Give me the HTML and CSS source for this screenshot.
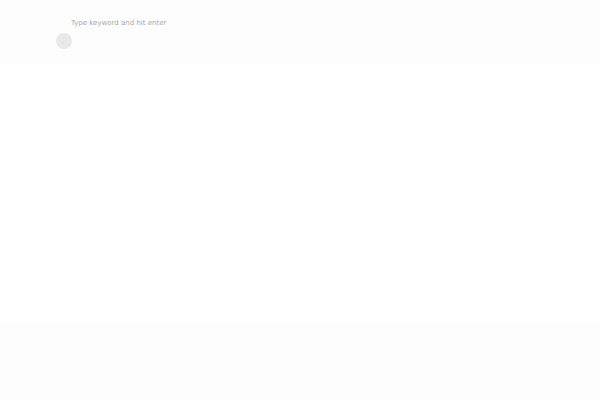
FILE: index.html
```
<!DOCTYPE html>
<html lang="en">
<head>
    <meta charset="UTF-8">
    <meta name="viewport" content="width=device-width, initial-scale=1">
    <title>Search</title>
    <link rel="stylesheet" href="styles.css">
</head>
<body>
    <header class="header">
        <form class="search_form" role="search">
            <input class="search_input" type="search" name="s" placeholder="Type keyword and hit enter" aria-label="Search">
            <button class="search_btn" type="submit" aria-label="Submit search">
                <svg viewBox="0 0 16 16" aria-hidden="true">
                    <circle cx="7" cy="7" r="3"/>
                    <path d="M9.2 9.2L12 12"/>
                </svg>
            </button>
        </form>
    </header>
    <main class="content"></main>
    <footer class="footer"></footer>
</body>
</html>
```

FILE: styles.css
```
*{
    box-sizing:border-box;
    margin:0;
    padding:0;
}
body{
    min-height:100vh;
    display:flex;
    flex-direction:column;
    background:#fefefe;
    font-family:"DejaVu Sans", sans-serif;
}
.header{
    padding:13px 56px 15px;
    background:#fdfdfd;
}
.search_form{
    display:flex;
    flex-direction:column;
    align-items:flex-start;
}
.search_input{
    width:100%;
    height:20px;
    padding:0 15px;
    border:none;
    outline:none;
    background:none;
    font-family:inherit;
    font-size:7px;
    color:#777;
    appearance:none;
}
.search_input::placeholder{
    color:#a9a9a9;
    opacity:1;
}
.search_btn{
    width:16px;
    height:16px;
    border:none;
    border-radius:50%;
    background:#e9e9e9;
    cursor:pointer;
}
.search_btn svg{
    display:block;
    width:16px;
    height:16px;
    fill:none;
    stroke:#e6e6e6;
}
.content{
    flex:1;
}
.footer{
    min-height:76px;
    background:#fdfdfd;
}
```
